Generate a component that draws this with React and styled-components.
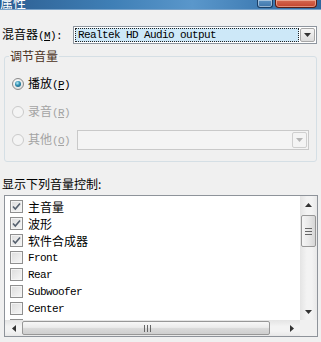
import React from 'react';
import styled, { createGlobalStyle } from 'styled-components';

const Global = createGlobalStyle`
  html, body { margin: 0; padding: 0; background: #f0f0f0; }
  body { font-family: "Noto Sans CJK SC", "Noto Sans", sans-serif; }
`;

const Window = styled.div`
  width: 321px;
  height: 342px;
  overflow: hidden;
  background: #f0f0f0;
  display: flex;
  flex-direction: column;
  font-family: "Noto Sans CJK SC", "Noto Sans", sans-serif;
  font-size: 12px;
  color: #000;
`;

const TitleBar = styled.div`
  height: 10px;
  flex: none;
  display: flex;
  align-items: flex-end;
  overflow: hidden;
  box-sizing: border-box;
  background: linear-gradient(90deg, #2d5f92 0%, #3f7fb6 35%, #5a97cb 60%, #3b78b0 85%, #2f679e 100%);
  border-bottom: 1px solid #7aa2c8;
`;

const TitleText = styled.span`
  color: #fff;
  font-size: 13px;
  line-height: 15px;
  flex: none;
  margin-bottom: -1px;
`;

const TitleButtons = styled.div`
  margin-left: auto;
  align-self: flex-start;
  display: flex;
  gap: 2px;
  margin-right: 4px;
`;

const HelpButton = styled.span`
  width: 16px;
  height: 8px;
  box-sizing: border-box;
  border: 1px solid #1b3f66;
  border-top: none;
  border-radius: 0 0 3px 3px;
  background: linear-gradient(180deg, #5d93c4, #3d73a8);
  box-shadow: inset 0 0 0 1px rgba(255,255,255,0.45);
`;

const CloseButton = styled.span`
  width: 42px;
  height: 8px;
  box-sizing: border-box;
  border: 1px solid #5a1d14;
  border-top: none;
  border-radius: 0 0 4px 4px;
  background: linear-gradient(180deg, #d66a52, #c2432c);
  box-shadow: inset 0 0 0 1px rgba(255,220,200,0.5);
`;

const FieldRow = styled.div`
  display: flex;
  align-items: center;
  height: 18px;
  margin-top: 16px;
  padding-left: 2px;
  flex: none;
`;

const FieldLabel = styled.span`
  width: 71px;
  flex: none;
  white-space: nowrap;
  line-height: 14px;
  color: ${p => (p.$disabled ? '#a3a3a3' : '#000')};
`;

const Mnemonic = styled.span`
  font-family: "Liberation Mono", monospace;
  font-size: 11px;
  letter-spacing: -0.6px;
  u { text-decoration-thickness: 1px; text-underline-offset: 1px; }
`;

const Combo = styled.div`
  display: flex;
  align-items: stretch;
  box-sizing: border-box;
  width: ${p => p.$width}px;
  height: ${p => p.$height}px;
  border: 1px solid ${p => (p.$disabled ? '#c9c9c9' : '#8e969f')};
  background: ${p => (p.$disabled ? '#f4f4f4' : '#fff')};
  padding: 1px;
  gap: 1px;
  margin-left: ${p => p.$offset || 0}px;
`;

const ComboText = styled.div`
  flex: 1;
  display: flex;
  align-items: center;
  background: ${p => (p.$selected ? '#cde8f8' : 'transparent')};
  outline: ${p => (p.$selected ? '1px dotted #222' : 'none')};
  outline-offset: -1px;
  padding-left: 3px;
  font-family: "Liberation Mono", monospace;
  font-size: 11px;
  letter-spacing: -0.6px;
  white-space: nowrap;
`;

const ComboArrow = styled.div`
  width: 15px;
  flex: none;
  box-sizing: border-box;
  border: 1px solid ${p => (p.$disabled ? '#cfcfcf' : '#a7a7a7')};
  border-radius: 2px;
  background: ${p => (p.$disabled ? '#f4f4f4' : 'linear-gradient(180deg, #f6f6f6, #dcdcdc)')};
  display: flex;
  align-items: center;
  justify-content: center;
`;

const Group = styled.fieldset`
  margin: 6px 4px 0 4px;
  padding: 8px 0 7px 0;
  border: 1px solid #d5dfe5;
  border-radius: 3px;
  flex: none;
  min-width: 0;
`;

const Legend = styled.legend`
  margin-left: 4px;
  padding: 0 1px;
  line-height: 12px;
  font-size: 12px;
  color: #4a3022;
`;

const RadioRow = styled.div`
  display: flex;
  align-items: center;
  height: 28px;
  padding-left: 7px;
  gap: 4px;
`;

const Radio = styled.span`
  position: relative;
  width: 12px;
  height: 12px;
  flex: none;
  box-sizing: border-box;
  border-radius: 50%;
  border: 1px solid ${p => (p.$disabled ? '#cacaca' : '#8a8a8a')};
  background: ${p => (p.$disabled
    ? '#f4f4f4'
    : 'radial-gradient(circle at 40% 35%, #ffffff 0%, #e6e6e6 60%, #cfcfcf 100%)')};
  &::after {
    content: '';
    display: ${p => (p.$checked ? 'block' : 'none')};
    position: absolute;
    inset: 2px;
    border-radius: 50%;
    background: radial-gradient(circle at 40% 35%, #b7ecf7 0%, #2f8db0 45%, #125571 100%);
  }
`;

const RadioLabel = styled.span`
  width: ${p => (p.$width ? `${p.$width}px` : 'auto')};
  flex: none;
  white-space: nowrap;
  line-height: 14px;
  color: ${p => (p.$disabled ? '#a3a3a3' : '#000')};
`;

const SectionLabel = styled.div`
  margin-top: 15px;
  padding-left: 2px;
  line-height: 14px;
  flex: none;
`;

const ListBox = styled.div`
  margin: 4px 3px 0 4px;
  height: 142px;
  flex: none;
  box-sizing: border-box;
  border: 1px solid #8e939a;
  background: #fff;
  display: grid;
  grid-template-columns: 1fr 17px;
  grid-template-rows: 1fr 16px;
  overflow: hidden;
`;

const Items = styled.div`
  overflow: hidden;
  padding: 2px 0 0 5px;
`;

const Item = styled.div`
  height: 17px;
  display: flex;
  align-items: center;
  gap: 5px;
`;

const CheckBox = styled.span`
  width: 13px;
  height: 13px;
  flex: none;
  box-sizing: border-box;
  border: 1px solid #8f8f8f;
  background: linear-gradient(135deg, #dcdcdc, #f7f7f7);
  box-shadow: inset 0 0 0 1px #f4f4f4;
  display: flex;
  align-items: center;
  justify-content: center;
`;

const ItemText = styled.span`
  white-space: nowrap;
  line-height: 14px;
  font-family: ${p => (p.$latin ? '"Liberation Mono", monospace' : 'inherit')};
  font-size: ${p => (p.$latin ? '11px' : '12px')};
  letter-spacing: ${p => (p.$latin ? '-0.6px' : '0')};
`;

const VScroll = styled.div`
  display: flex;
  flex-direction: column;
  background: linear-gradient(90deg, #e4e4e4, #f3f3f3 40%, #f3f3f3 70%, #e8e8e8);
`;

const HScroll = styled.div`
  display: flex;
  background: linear-gradient(180deg, #e4e4e4, #f3f3f3 40%, #f3f3f3 70%, #e8e8e8);
`;

const ScrollArrow = styled.div`
  width: 17px;
  height: ${p => (p.$horizontal ? '16px' : '17px')};
  flex: none;
  display: flex;
  align-items: center;
  justify-content: center;
`;

const VThumb = styled.div`
  margin: 2px 1px 0 1px;
  height: 32px;
  flex: none;
  box-sizing: border-box;
  border: 1px solid #979797;
  border-radius: 2px;
  background: linear-gradient(90deg, #f5f5f5, #e9e9e9 50%, #d6d6d6);
  display: flex;
  align-items: center;
  justify-content: center;
`;

const HThumb = styled.div`
  margin: 1px 0 1px 0;
  width: 248px;
  flex: none;
  box-sizing: border-box;
  border: 1px solid #979797;
  border-radius: 2px;
  background: linear-gradient(180deg, #f7f7f7, #ebebeb 45%, #d9d9d9 55%, #cfcfcf);
  display: flex;
  align-items: center;
  justify-content: center;
  padding-left: 2px;
`;

const Spacer = styled.div`
  flex: 1;
`;

const Corner = styled.div`
  background: #f0f0f0;
`;

const ArrowDown = ({ color = '#333' }) => (
  <svg width="7" height="4" viewBox="0 0 7 4"><path d="M0 0h7L3.5 4z" fill={color} /></svg>
);
const ArrowUp = ({ color = '#333' }) => (
  <svg width="7" height="4" viewBox="0 0 7 4"><path d="M0 4h7L3.5 0z" fill={color} /></svg>
);
const ArrowLeft = ({ color = '#333' }) => (
  <svg width="4" height="7" viewBox="0 0 4 7"><path d="M4 0v7L0 3.5z" fill={color} /></svg>
);
const ArrowRight = ({ color = '#333' }) => (
  <svg width="4" height="7" viewBox="0 0 4 7"><path d="M0 0v7L4 3.5z" fill={color} /></svg>
);

const Check = () => (
  <svg width="9" height="9" viewBox="0 0 9 9">
    <path d="M1 4.5l2.3 2.5L8 1.5" fill="none" stroke="#55606e" strokeWidth="1.6" />
  </svg>
);

const GripV = () => (
  <svg width="7" height="7" viewBox="0 0 7 7">
    <path d="M0 0.5h7M0 3.5h7M0 6.5h7" stroke="#666" strokeWidth="1" />
  </svg>
);
const GripH = () => (
  <svg width="7" height="7" viewBox="0 0 7 7">
    <path d="M0.5 0v7M3.5 0v7M6.5 0v7" stroke="#666" strokeWidth="1" />
  </svg>
);

const items = [
  { label: '主音量', checked: true },
  { label: '波形', checked: true },
  { label: '软件合成器', checked: true },
  { label: 'Front', latin: true },
  { label: 'Rear', latin: true },
  { label: 'Subwoofer', latin: true },
  { label: 'Center', latin: true },
  { label: '', latin: true },
];

export default function App() {
  return (
    <Window>
      <Global />
      <TitleBar>
        <TitleText>属性</TitleText>
        <TitleButtons>
          <HelpButton />
          <CloseButton />
        </TitleButtons>
      </TitleBar>

      <FieldRow>
        <FieldLabel>混音器<Mnemonic>(<u>M</u>):</Mnemonic></FieldLabel>
        <Combo $width={244} $height={18}>
          <ComboText $selected>Realtek HD Audio output</ComboText>
          <ComboArrow><ArrowDown /></ComboArrow>
        </Combo>
      </FieldRow>

      <Group>
        <Legend>调节音量</Legend>
        <RadioRow>
          <Radio $checked />
          <RadioLabel>播放<Mnemonic>(<u>P</u>)</Mnemonic></RadioLabel>
        </RadioRow>
        <RadioRow>
          <Radio $disabled />
          <RadioLabel $disabled>录音<Mnemonic>(<u>R</u>)</Mnemonic></RadioLabel>
        </RadioRow>
        <RadioRow>
          <Radio $disabled />
          <RadioLabel $disabled $width={45}>其他<Mnemonic>(<u>O</u>)</Mnemonic></RadioLabel>
          <Combo $width={232} $height={20} $disabled>
            <ComboText />
            <ComboArrow $disabled><ArrowDown color="#b5b5b5" /></ComboArrow>
          </Combo>
        </RadioRow>
      </Group>

      <SectionLabel>显示下列音量控制:</SectionLabel>

      <ListBox>
        <Items>
          {items.map((it, i) => (
            <Item key={i}>
              <CheckBox>{it.checked && <Check />}</CheckBox>
              {it.label && <ItemText $latin={it.latin}>{it.label}</ItemText>}
            </Item>
          ))}
        </Items>
        <VScroll>
          <ScrollArrow><ArrowUp /></ScrollArrow>
          <VThumb><GripV /></VThumb>
          <Spacer />
          <ScrollArrow><ArrowDown /></ScrollArrow>
        </VScroll>
        <HScroll>
          <ScrollArrow $horizontal><ArrowLeft /></ScrollArrow>
          <HThumb><GripH /></HThumb>
          <Spacer />
          <ScrollArrow $horizontal><ArrowRight /></ScrollArrow>
        </HScroll>
        <Corner />
      </ListBox>
    </Window>
  );
}
